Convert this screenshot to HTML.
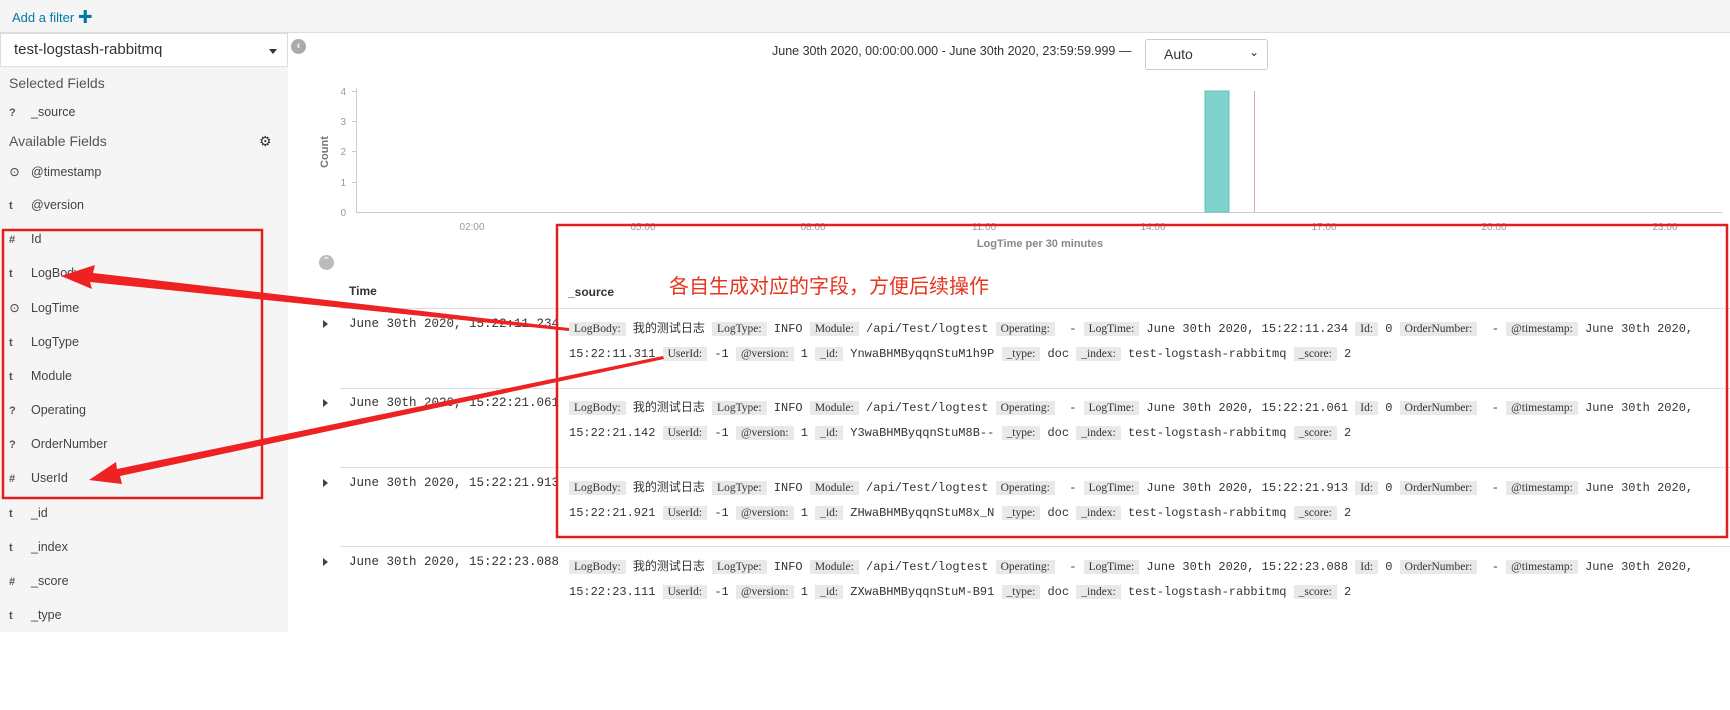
<!DOCTYPE html>
<html><head><meta charset="utf-8">
<style>
*{box-sizing:border-box;margin:0;padding:0}
body{width:1730px;height:710px;overflow:hidden;background:#fff;position:relative;font-family:"Liberation Sans","Noto Sans CJK SC",sans-serif;color:#444}
.abs{position:absolute}
#top{left:0;top:0;width:1730px;height:33px;background:#f5f5f5;border-bottom:1px solid #ddd}
#top span{position:absolute;left:12px;top:6px;font-size:13px;color:#0079a5}
#side{left:0;top:33px;width:288px;height:599px;background:#f5f5f5}
#sel{left:0;top:33px;width:288px;height:34px;background:#fff;border:1px solid #ddd;font-size:15px;color:#333;padding:7px 0 0 13px}
#sel:after{content:"";position:absolute;right:10px;top:15px;border:4px solid transparent;border-top:5px solid #333}
.sh{font-size:14px;color:#555;left:9px}
.f{left:9px;font-size:12.5px;color:#444;height:20px}
.f b{display:inline-block;width:22px;font-size:11px;color:#555}
.mono{font-family:"Liberation Mono","Noto Sans CJK SC",monospace}
.row{left:340px;width:1390px;border-top:1px solid #ddd}
.tm{left:349px;font-size:12.5px;color:#333}
.car{left:323px;width:0;height:0;border:4px solid transparent;border-left:5px solid #444;border-right:0}
.src{left:569px;font-size:12px;color:#333;white-space:nowrap;overflow:hidden;width:1155px;line-height:25px}
.k{background:#e9e9e9;padding:1px 5px;font-family:"Liberation Serif","Noto Serif CJK SC",serif;font-size:11.5px;color:#333}
</style></head><body>
<div id="top" class="abs"><span>Add a filter <b style="font-size:15px">✚</b></span></div>
<div id="side" class="abs"></div>
<div id="sel" class="abs">test-logstash-rabbitmq</div>
<div class="abs sh" style="top:75px">Selected Fields</div>
<div class="abs f" style="top:105px"><b>?</b>_source</div>
<div class="abs sh" style="top:133px">Available Fields</div>
<div class="abs" style="left:259px;top:133px;font-size:14px;color:#333">⚙</div>
<div class="abs f" style="top:164px"><b>⊙</b>@timestamp</div>
<div class="abs f" style="top:198px"><b>t</b>@version</div>
<div class="abs f" style="top:232px"><b>#</b>Id</div>
<div class="abs f" style="top:266px"><b>t</b>LogBody</div>
<div class="abs f" style="top:300px"><b>⊙</b>LogTime</div>
<div class="abs f" style="top:335px"><b>t</b>LogType</div>
<div class="abs f" style="top:369px"><b>t</b>Module</div>
<div class="abs f" style="top:403px"><b>?</b>Operating</div>
<div class="abs f" style="top:437px"><b>?</b>OrderNumber</div>
<div class="abs f" style="top:471px"><b>#</b>UserId</div>
<div class="abs f" style="top:506px"><b>t</b>_id</div>
<div class="abs f" style="top:540px"><b>t</b>_index</div>
<div class="abs f" style="top:574px"><b>#</b>_score</div>
<div class="abs f" style="top:608px"><b>t</b>_type</div>

<div class="abs" style="left:291px;top:39px;width:15px;height:15px;border-radius:50%;background:#aaa;color:#fff;font-size:11px;line-height:15px;text-align:center;font-weight:bold">‹</div>
<div class="abs" style="left:319px;top:255px;width:15px;height:15px;border-radius:50%;background:#bbb;color:#fff;font-size:10px;line-height:14px;text-align:center">⌃</div>

<div class="abs" style="left:772px;top:44px;font-size:12.5px;color:#333">June 30th 2020, 00:00:00.000 - June 30th 2020, 23:59:59.999 —</div>
<div class="abs" style="left:1145px;top:39px;width:123px;height:31px;border:1px solid #ccc;border-radius:3px;font-size:14px;color:#333;padding:6px 0 0 18px">Auto<span style="position:absolute;right:8px;top:5px;font-size:12px">⌄</span></div>

<svg class="abs" style="left:0;top:0" width="1730" height="710">
<g stroke="#ccc" stroke-width="1" fill="none">
<line x1="356.5" y1="88" x2="356.5" y2="212"/>
<line x1="356" y1="212.5" x2="1722" y2="212.5"/>
<line x1="352" y1="91.5" x2="356" y2="91.5"/><line x1="352" y1="121.5" x2="356" y2="121.5"/><line x1="352" y1="151.5" x2="356" y2="151.5"/><line x1="352" y1="182.5" x2="356" y2="182.5"/>
</g>
<g font-size="10" fill="#999" font-family="Liberation Sans">
<text x="346" y="95" text-anchor="end">4</text><text x="346" y="125" text-anchor="end">3</text><text x="346" y="155" text-anchor="end">2</text><text x="346" y="186" text-anchor="end">1</text><text x="346" y="216" text-anchor="end">0</text>
<text x="472" y="230" text-anchor="middle">02:00</text><text x="643" y="230" text-anchor="middle">05:00</text><text x="813" y="230" text-anchor="middle">08:00</text><text x="984" y="230" text-anchor="middle">11:00</text><text x="1153" y="230" text-anchor="middle">14:00</text><text x="1324" y="230" text-anchor="middle">17:00</text><text x="1494" y="230" text-anchor="middle">20:00</text><text x="1665" y="230" text-anchor="middle">23:00</text>
</g>
<text x="328" y="152" font-size="11" font-weight="bold" fill="#777" font-family="Liberation Sans" transform="rotate(-90 328 152)" text-anchor="middle">Count</text>
<text x="1040" y="247" font-size="11" font-weight="bold" fill="#888" font-family="Liberation Sans" text-anchor="middle">LogTime per 30 minutes</text>
<rect x="1205" y="91" width="24" height="121" fill="#7fd3cc" stroke="#5fc0b5"/>
<line x1="1254.5" y1="91" x2="1254.5" y2="212" stroke="#f0a0a0"/>
</svg>

<div class="abs" style="left:349px;top:284px;font-size:12px;font-weight:bold;color:#333">Time</div>
<div class="abs" style="left:568px;top:285px;font-size:12px;font-weight:bold;color:#333">_source</div>
<div class="abs" style="left:669px;top:270px;font-size:20px;color:#e8331c;font-family:'Noto Sans CJK SC',sans-serif">各自生成对应的字段，方便后续操作</div>

<div class="abs row" style="top:308px"></div>
<div class="abs row" style="top:388px"></div>
<div class="abs row" style="top:467px"></div>
<div class="abs row" style="top:546px"></div>

<div class="abs car" style="top:320px"></div>
<div class="abs car" style="top:399px"></div>
<div class="abs car" style="top:479px"></div>
<div class="abs car" style="top:558px"></div>
<div class="abs tm mono" style="top:317px">June 30th 2020, 15:22:11.234</div>
<div class="abs tm mono" style="top:396px">June 30th 2020, 15:22:21.061</div>
<div class="abs tm mono" style="top:476px">June 30th 2020, 15:22:21.913</div>
<div class="abs tm mono" style="top:555px">June 30th 2020, 15:22:23.088</div>

<div class="abs src mono" style="top:317px"><span class="k">LogBody:</span> 我的测试日志 <span class="k">LogType:</span> INFO <span class="k">Module:</span> /api/Test/logtest <span class="k">Operating:</span>&nbsp; - <span class="k">LogTime:</span> June 30th 2020, 15:22:11.234 <span class="k">Id:</span> 0 <span class="k">OrderNumber:</span>&nbsp; - <span class="k">@timestamp:</span> June 30th 2020,<br>15:22:11.311 <span class="k">UserId:</span> -1 <span class="k">@version:</span> 1 <span class="k">_id:</span> YnwaBHMByqqnStuM1h9P <span class="k">_type:</span> doc <span class="k">_index:</span> test-logstash-rabbitmq <span class="k">_score:</span> 2</div>
<div class="abs src mono" style="top:396px"><span class="k">LogBody:</span> 我的测试日志 <span class="k">LogType:</span> INFO <span class="k">Module:</span> /api/Test/logtest <span class="k">Operating:</span>&nbsp; - <span class="k">LogTime:</span> June 30th 2020, 15:22:21.061 <span class="k">Id:</span> 0 <span class="k">OrderNumber:</span>&nbsp; - <span class="k">@timestamp:</span> June 30th 2020,<br>15:22:21.142 <span class="k">UserId:</span> -1 <span class="k">@version:</span> 1 <span class="k">_id:</span> Y3waBHMByqqnStuM8B-- <span class="k">_type:</span> doc <span class="k">_index:</span> test-logstash-rabbitmq <span class="k">_score:</span> 2</div>
<div class="abs src mono" style="top:476px"><span class="k">LogBody:</span> 我的测试日志 <span class="k">LogType:</span> INFO <span class="k">Module:</span> /api/Test/logtest <span class="k">Operating:</span>&nbsp; - <span class="k">LogTime:</span> June 30th 2020, 15:22:21.913 <span class="k">Id:</span> 0 <span class="k">OrderNumber:</span>&nbsp; - <span class="k">@timestamp:</span> June 30th 2020,<br>15:22:21.921 <span class="k">UserId:</span> -1 <span class="k">@version:</span> 1 <span class="k">_id:</span> ZHwaBHMByqqnStuM8x_N <span class="k">_type:</span> doc <span class="k">_index:</span> test-logstash-rabbitmq <span class="k">_score:</span> 2</div>
<div class="abs src mono" style="top:555px"><span class="k">LogBody:</span> 我的测试日志 <span class="k">LogType:</span> INFO <span class="k">Module:</span> /api/Test/logtest <span class="k">Operating:</span>&nbsp; - <span class="k">LogTime:</span> June 30th 2020, 15:22:23.088 <span class="k">Id:</span> 0 <span class="k">OrderNumber:</span>&nbsp; - <span class="k">@timestamp:</span> June 30th 2020,<br>15:22:23.111 <span class="k">UserId:</span> -1 <span class="k">@version:</span> 1 <span class="k">_id:</span> ZXwaBHMByqqnStuM-B91 <span class="k">_type:</span> doc <span class="k">_index:</span> test-logstash-rabbitmq <span class="k">_score:</span> 2</div>

<svg class="abs" style="left:0;top:0" width="1730" height="710">
<rect x="3" y="230" width="259" height="268" fill="none" stroke="#e02020" stroke-width="2.5"/>
<rect x="557" y="225" width="1170" height="312" fill="none" stroke="#e02020" stroke-width="2.5"/>
<polygon points="569,328 569,331 90,282 92,289 61,276 95,265 93,273" fill="#ee2222"/>
<polygon points="663,356 664,359 120,476 122,484 89,480 116,462 117,469" fill="#ee2222"/>
</svg>
</body></html>
